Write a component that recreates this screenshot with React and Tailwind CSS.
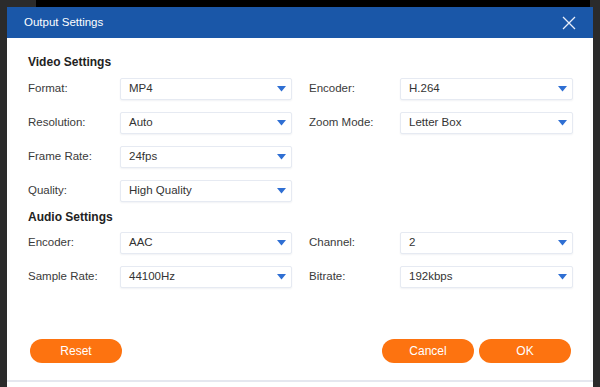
const font = { fontFamily: '"Liberation Sans", Arial, sans-serif' };

const VIDEO = [
  [['Format:', 'MP4'], ['Encoder:', 'H.264']],
  [['Resolution:', 'Auto'], ['Zoom Mode:', 'Letter Box']],
  [['Frame Rate:', '24fps'], null],
  [['Quality:', 'High Quality'], null],
];

const AUDIO = [
  [['Encoder:', 'AAC'], ['Channel:', '2']],
  [['Sample Rate:', '44100Hz'], ['Bitrate:', '192kbps']],
];

function Select({ value }) {
  return (
    <div className="flex-1 h-[22px] flex items-center justify-between pl-2 pr-[5px] bg-white border border-[#e6eaf2] rounded-[2px] shadow-[0_1px_2px_rgba(20,40,90,0.06)]">
      <span className="text-[11.5px] text-[#333]">{value}</span>
      <svg width="9" height="6" viewBox="0 0 9 6">
        <path d="M0 0 H9 L4.5 5.5 Z" fill="#2f6fd3" />
      </svg>
    </div>
  );
}

function Field({ label, value, labelW }) {
  return (
    <div className="flex items-center">
      <span className={`${labelW} text-[11.5px] text-[#3a3a3a]`}>{label}</span>
      <Select value={value} />
    </div>
  );
}

function Rows({ rows }) {
  return (
    <div className="flex flex-col gap-[12px]">
      {rows.map((row, i) => (
        <div key={i} className="flex h-[22px]">
          <div className="w-[264px]">
            <Field label={row[0][0]} value={row[0][1]} labelW="w-[92px]" />
          </div>
          <div className="w-[17px]" />
          <div className="flex-1">
            {row[1] && <Field label={row[1][0]} value={row[1][1]} labelW="w-[91px]" />}
          </div>
        </div>
      ))}
    </div>
  );
}

function Btn({ children }) {
  return (
    <button className="w-[92px] h-[24px] rounded-full bg-[#fd7310] text-white text-[12px]">
      {children}
    </button>
  );
}

export default function App() {
  return (
    <div className="w-[600px] h-[387px] bg-[#2b2b2b] overflow-hidden" style={font}>
      <div className="flex h-[7px]">
        <div className="w-[36px] bg-[#2b2b2b]" />
        <div className="flex-1 bg-black" />
        <div className="w-[10px] bg-[#2b2b2b]" />
      </div>
      <div className="ml-[7px] w-[586px] h-[380px] bg-white flex flex-col">
        <div className="h-[31px] bg-[#1a57a8] flex items-center justify-between pl-[17px] pr-[17px]">
          <span className="text-white text-[11.5px]">Output Settings</span>
          <svg width="14" height="14" viewBox="0 0 14 14">
            <path d="M1 1 L13 13 M13 1 L1 13" stroke="#e8eefa" strokeWidth="1.3" />
          </svg>
        </div>
        <div className="flex-1 flex flex-col pl-[21px] pr-[20px] border-b-2 border-[#e5e7ef]">
          <h2 className="mt-[16px] h-[16px] leading-[16px] text-[12px] font-bold text-[#222]">Video Settings</h2>
          <div className="mt-[8px]">
            <Rows rows={VIDEO} />
          </div>
          <h2 className="mt-[7px] h-[16px] leading-[16px] text-[12px] font-bold text-[#222]">Audio Settings</h2>
          <div className="mt-[7px]">
            <Rows rows={AUDIO} />
          </div>
          <div className="flex-1" />
          <div className="flex items-center justify-between pl-[2px] pr-[2px] mb-[17px]">
            <Btn>Reset</Btn>
            <div className="flex gap-[5px]">
              <Btn>Cancel</Btn>
              <Btn>OK</Btn>
            </div>
          </div>
        </div>
        <div className="h-[5px] bg-white" />
      </div>
    </div>
  );
}
